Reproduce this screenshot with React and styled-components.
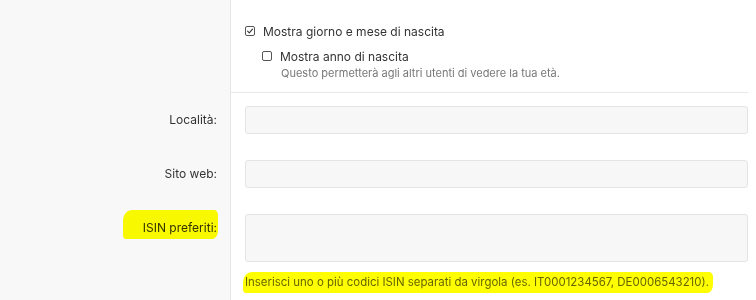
import React from 'react'
import styled, { createGlobalStyle } from 'styled-components'

const GlobalStyle = createGlobalStyle`
  html, body {
    margin: 0;
    padding: 0;
    background: #fff;
  }
  body {
    font-family: Inter, "Noto Sans", "Liberation Sans", sans-serif;
    color: #333;
  }
`

// 체크박스 아이콘
const CheckIcon = () => (
  <svg width="8" height="8" viewBox="0 0 8 8">
    <path d="M1.6 4.1 L3.3 5.8 L6.5 2.2" fill="none" stroke="#333" strokeWidth="1.1" strokeLinecap="round" strokeLinejoin="round" />
  </svg>
)

const App = () => {
  return (
    <>
      <GlobalStyle />
      <Page>
        <Row>
          <LabelCell />
          <CheckCell>
            <CheckRow>
              <Box><CheckIcon /></Box>
              <CheckText>Mostra giorno e mese di nascita</CheckText>
            </CheckRow>
            <CheckRow $indent>
              <Box />
              <CheckText>Mostra anno di nascita</CheckText>
            </CheckRow>
            <CheckHint>Questo permetterà agli altri utenti di vedere la tua età.</CheckHint>
          </CheckCell>
        </Row>

        <Row>
          <LabelCell><Label>Località:</Label></LabelCell>
          <FieldCell><Input /></FieldCell>
        </Row>

        <Row>
          <LabelCell><Label>Sito web:</Label></LabelCell>
          <FieldCell><Input /></FieldCell>
        </Row>

        <Row>
          <LabelCell>
            <Label><Marker $left={20} $right={1} $top={10} $bottom={4}>ISIN preferiti:</Marker></Label>
          </LabelCell>
          <FieldCell>
            <TextArea />
            <Help>
              <Marker $left={2} $right={4} $top={3} $bottom={4}>
                Inserisci uno o più codici ISIN separati da virgola (es. IT0001234567, DE0006543210).
              </Marker>
            </Help>
          </FieldCell>
        </Row>
      </Page>
    </>
  )
}

const Page = styled.div`
  width: 756px;
  height: 300px;
  overflow: hidden;
  display: flex;
  flex-direction: column;
`
const Row = styled.div`
  display: grid;
  grid-template-columns: 231px 1fr;
`
const LabelCell = styled.div`
  background: #f8f8f8;
  border-right: 1px solid #e6e6e6;
  padding: 13px 13px 0 0;
  text-align: right;
`
const Label = styled.div`
  line-height: 28px;
  font-size: 12px;
  color: #333;
`
// 형광펜 표시
const Marker = styled.span`
  position: relative;
  &::after {
    content: '';
    position: absolute;
    left: ${p => -p.$left}px;
    right: ${p => -p.$right}px;
    top: ${p => -p.$top}px;
    bottom: ${p => -p.$bottom}px;
    background: #ffff00;
    mix-blend-mode: multiply;
    border-radius: 9px 4px 6px 3px / 10px 5px 8px 4px;
    pointer-events: none;
  }
`
const CheckCell = styled.div`
  margin-right: 8px;
  padding: 22px 0 0 14px;
  height: 93px;
  box-sizing: border-box;
  border-bottom: 1px solid #e8e8e8;
`
const CheckRow = styled.div`
  display: flex;
  align-items: center;
  gap: 8px;
  margin-left: ${p => (p.$indent ? '17px' : '0')};
  margin-bottom: ${p => (p.$indent ? '0' : '7px')};
  height: 18px;
`
const Box = styled.span`
  width: 10px;
  height: 10px;
  border: 1px solid #555;
  border-radius: 2px;
  box-sizing: border-box;
  display: flex;
  align-items: center;
  justify-content: center;
  background: #fff;
`
const CheckText = styled.span`
  font-size: 12px;
  color: #333;
`
const CheckHint = styled.div`
  margin-left: 36px;
  font-size: 11px;
  color: #777;
  line-height: 16px;
`
const FieldCell = styled.div`
  padding: 13px 8px 13px 14px;
`
const Input = styled.div`
  height: 28px;
  box-sizing: border-box;
  background: #f7f7f7;
  border: 1px solid #e4e4e4;
  border-radius: 3px;
`
const TextArea = styled(Input)`
  height: 48px;
`
const Help = styled.div`
  margin-top: 13px;
  font-size: 11.45px;
  line-height: 14px;
  color: #666;
`

export default App
